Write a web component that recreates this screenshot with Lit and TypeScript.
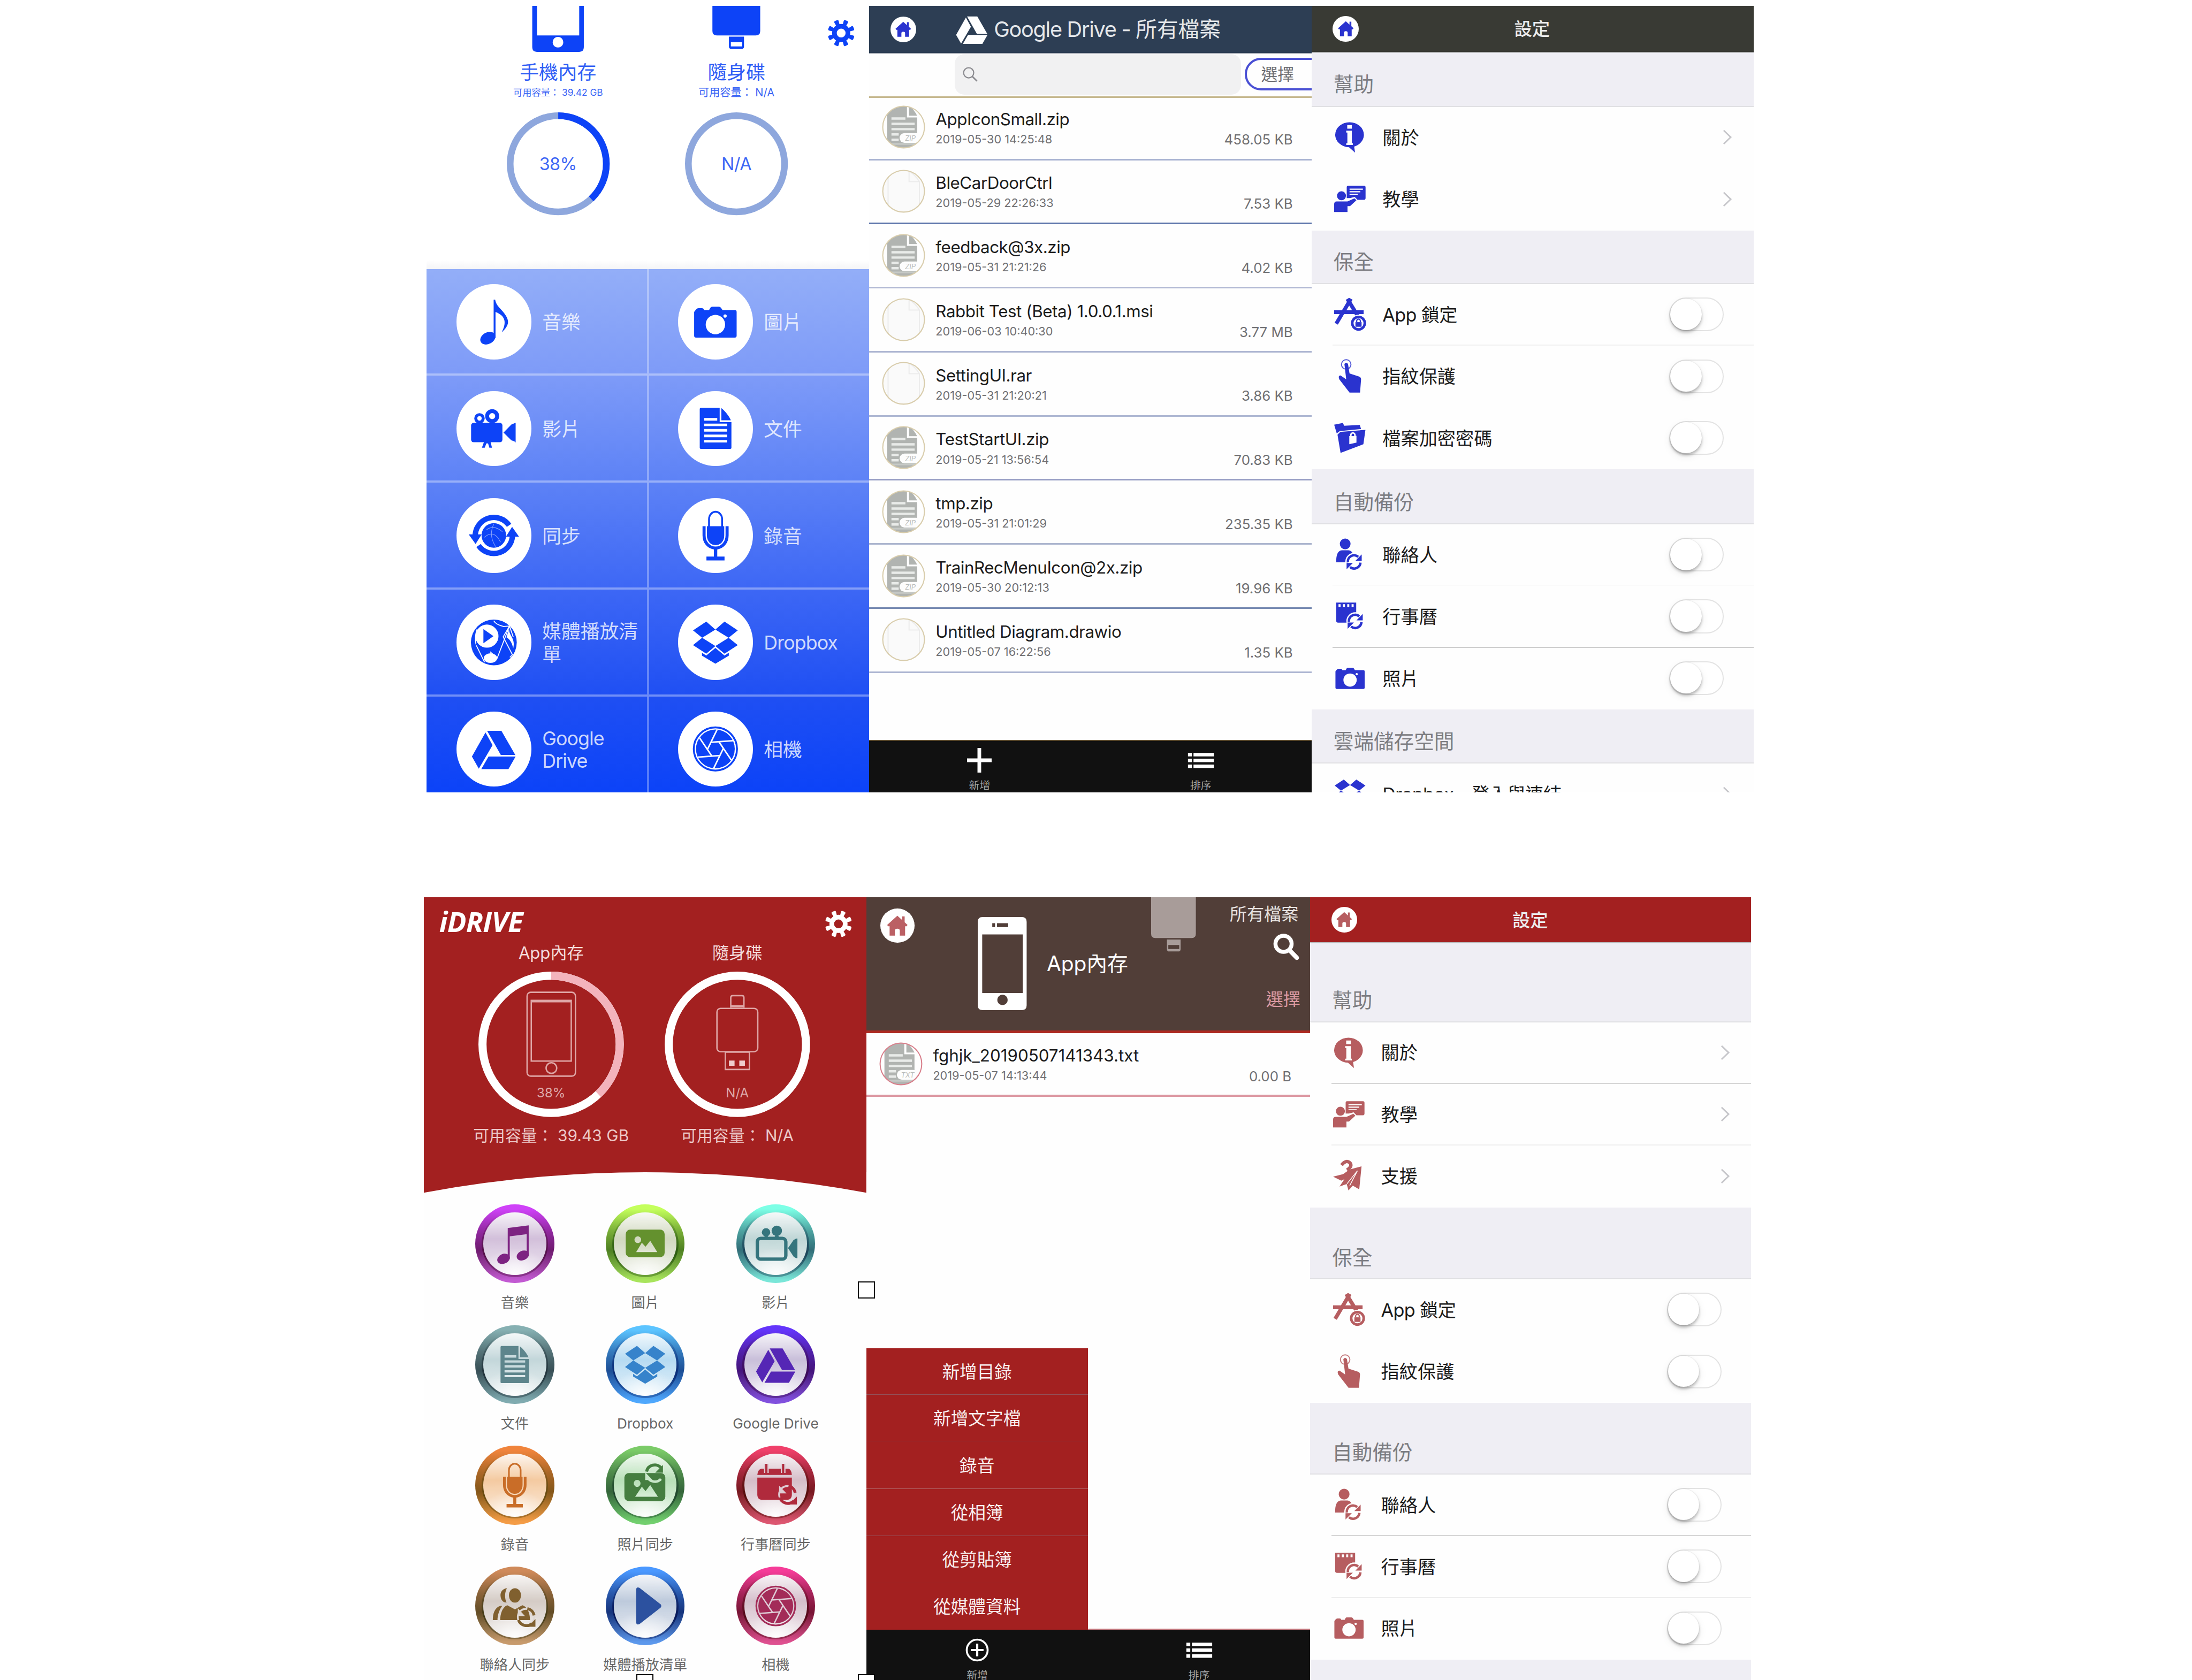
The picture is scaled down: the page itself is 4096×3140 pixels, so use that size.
import { LitElement, html, svg, unsafeCSS, nothing } from "lit";
import { customElement, property } from "lit/decorators.js";
import { classMap } from "lit/directives/class-map.js";
import { styleMap } from "lit/directives/style-map.js";

/* Lengths in the style sheets are written in "u": the board is 1568u wide. */
const UNIT = 4096 / 1568;
const sheet = (s: TemplateStringsArray) =>
  unsafeCSS(s[0].replace(/(-?[\d.]+)u\b/g, (_, n) => `${(parseFloat(n) * UNIT).toFixed(3)}px`));

/* ---------- glyphs, all drawn on a 24 x 24 box ---------- */

const polar = (r: number, deg: number) =>
  `${(12 + r * Math.cos((deg * Math.PI) / 180)).toFixed(2)} ${(12 + r * Math.sin((deg * Math.PI) / 180)).toFixed(2)}`;

const apertureLines = () => {
  let d = "";
  for (let k = 0; k < 6; k++) {
    const a = 60 * k - 4;
    d += `M${polar(4.3, a)} L${polar(10.4, a + 99)} `;
  }
  return d;
};

const syncMark = (cx: number, cy: number, r: number) => svg`
  <g transform="translate(${cx} ${cy}) scale(${r / 6})">
    <circle r="6.9" fill="var(--cut)"></circle>
    <path d="M-4.9 .6 A4.9 4.9 0 0 1 3.2 -3.7" fill="none" stroke="currentColor" stroke-width="1.9"></path>
    <path d="M5.9 -5.6 V-.6 H1 Z" fill="currentColor"></path>
    <path d="M4.9 .8 A4.9 4.9 0 0 1 -3.2 4.2" fill="none" stroke="currentColor" stroke-width="1.9"></path>
    <path d="M-5.9 6 V1.1 H-1 Z" fill="currentColor"></path>
  </g>`;

const docShape = svg`
  <path fill-rule="evenodd" d="M4.2 .9 H14.3 V8.6 H20.6 V22.4 a.6 .6 0 0 1 -.6 .6 H4.2 a.6 .6 0 0 1 -.6 -.6 V1.5 a.6 .6 0 0 1 .6 -.6 Z
    M6 6.4 V7.8 H13 V6.4 Z M6 9.4 V10.8 H18.3 V9.4 Z M6 12.3 V13.7 H18.3 V12.3 Z M6 15.3 V16.7 H18.3 V15.3 Z M6 18.2 V19.5 H18.3 V18.2 Z"></path>
  <path d="M15.2 1.1 C17 2.5 19.4 5.4 20.3 7.6 H15.2 Z"></path>`;

const glyphs: Record<string, unknown> = {
  gear: svg`
    <circle cx="12" cy="12" r="6.1" fill="none" stroke="currentColor" stroke-width="4.2"></circle>
    ${[22.5, 67.5, 112.5, 157.5, 202.5, 247.5, 292.5, 337.5].map(
      (a) => svg`<path d="M10.7 6.4 L9.9 .9 Q9.9 -.2 11 -.2 H13 Q14.1 -.2 14.1 .9 L13.3 6.4 Z" transform="rotate(${a} 12 12)"></path>`
    )}`,
  note: svg`
    <ellipse cx="8.8" cy="20.7" rx="4.3" ry="3.1" transform="rotate(-28 8.8 20.7)"></ellipse>
    <path d="M11.9 0 H12.7 C13.2 3 15 4.2 17 6.6 C20.6 11 20.6 13.6 16.2 17.6 C18.8 12.6 18.6 8.8 12.9 6.6 V20.6 H11.9 Z"></path>`,
  notes: svg`
    <path d="M7.9 2.6 L20.4 1 V18.7 H19.2 V6.3 L9.1 7.6 V21 H7.9 Z"></path>
    <ellipse cx="5.4" cy="21" rx="3.9" ry="2.9" transform="rotate(-24 5.4 21)"></ellipse>
    <ellipse cx="16.9" cy="19" rx="3.8" ry="2.8" transform="rotate(-24 16.9 19)"></ellipse>`,
  camera: svg`
    <path fill-rule="evenodd" d="M1.6 5.3 Q2.2 4.6 3 4.6 H4.8 Q5.6 4.6 6 5.6 H8.6 L9.3 4.4 Q9.6 3.8 10.4 3.8 H13.8 Q14.6 3.8 15 4.4 L15.8 5.6 H22.4 Q23.4 5.6 23.4 6.6 V19.4 Q23.4 20.4 22.4 20.4 H1.6 Q.6 20.4 .6 19.4 V6.6 Z
      M12 8.2 a5.2 5.2 0 1 0 .01 0 Z M17.2 7.9 a.9 .9 0 1 0 .01 0 Z"></path>`,
  movie: svg`
    <circle cx="4.3" cy="6.6" r="2" fill="none" stroke="currentColor" stroke-width="1.6"></circle>
    <circle cx="11.1" cy="5.4" r="2.7" fill="none" stroke="currentColor" stroke-width="2.1"></circle>
    <rect x="-.2" y="9" width="16.8" height="10.4" rx="1.4"></rect>
    <path d="M17.2 14.2 L21.4 9.9 Q23.7 9 23.7 9 V19.6 Q23.5 19 21.4 18.4 Z"></path>
    <path d="M6.8 19 H10.2 L11 22.3 H9.6 L8.9 20 H8 L7.1 22.3 H5.6 Z"></path>`,
  cine: svg`
    <circle cx="6.2" cy="5.2" r="2.5"></circle><circle cx="12.6" cy="4.3" r="3.1"></circle>
    <rect x="1" y="8.8" width="17" height="12.4" rx="2" fill="none" stroke="currentColor" stroke-width="2"></rect>
    <path d="M5.6 6.6 H7 L7.6 9 H5 Z M11.8 6.6 H13.4 L14.2 9 H11 Z"></path>
    <path d="M19.3 14.6 L22.6 9.8 Q24.4 8.6 24.9 8.9 V20.6 Q24.2 20.8 22.6 19.6 Z"></path>`,
  doc: docShape,
  sync: svg`
    <path d="M2 12.6 A10 10 0 0 1 20.2 6.6" fill="none" stroke="currentColor" stroke-width="2.9"></path>
    <path d="M22 11.4 A10 10 0 0 1 3.8 17.4" fill="none" stroke="currentColor" stroke-width="2.9"></path>
    <path d="M-1.5 11.4 H5.5 L2.2 16.6 Z M25.5 12.6 H18.5 L21.8 7.4 Z"></path>
    <circle cx="12" cy="12" r="6.6"></circle>
    <path d="M8 9 Q12 6 16.6 10 M7 13 Q12 8.4 15.6 15.6 M12 5.8 Q9 12 13 18" fill="none" stroke="var(--cut)" stroke-width=".3" opacity=".5"></path>`,
  mic: svg`
    <path d="M8.6 7.5 V3.2 a3.5 3.9 0 0 1 7 0 V7.5" fill="none" stroke="currentColor" stroke-width="1"></path>
    <path d="M5.1 7 H19.1 V12 C19.1 16.2 16.4 18.9 13 19.5 V23.3 H16.9 V25.4 H7.2 V23.3 H11.2 V19.5 C7.8 18.9 5.1 16.2 5.1 12 Z"></path>
    <path d="M7.1 6.8 V12 C7.1 15.2 9.3 17.6 12.1 17.6 S17.1 15.2 17.1 12 V6.8" fill="none" stroke="var(--cut)" stroke-width=".7"></path>`,
  media: svg`
    <circle cx="12" cy="12" r="12.3"></circle>
    <g fill="none" stroke="var(--cut)" stroke-width=".5">
      <path d="M12 .4 Q13 2.4 17.2 3.4 L20.4 3.2 L22.4 9 M20.4 3.2 L13.8 20.4 L10 17 M20.4 3.2 L17 9 L22 18.6 L20.6 20"></path>
      <path d="M2.6 13.6 L7 22.6 M3 5 Q1.6 9 2.4 13"></path>
    </g>
    <path d="M20.2 4.6 C20 8.6 23.8 9.6 22.4 15.2 C21.6 10.6 19 9.4 18.8 9.2 Z" fill="var(--cut)"></path>
    <circle cx="8.3" cy="8.6" r="6.2" fill="var(--cut)"></circle>
    <path d="M6.4 4.8 L11.8 8.6 L6.4 12.4 Z"></path>
    <ellipse cx="10.2" cy="20.4" rx="3.6" ry="2.6" fill="var(--cut)"></ellipse>`,
  dropbox: svg`
    <path d="M7.1 .8 L0 5.5 L4.9 9.5 L12 5.1 Z M16.9 .8 L24 5.5 L19.1 9.5 L12 5.1 Z M0 13.4 L7.1 18 L12 13.9 L4.9 9.5 Z M24 13.4 L16.9 18 L12 13.9 L19.1 9.5 Z"></path>
    <path d="M12 14.9 L7.1 19 L4.8 17.5 V19.1 L12 23.4 L19.2 19.1 V17.5 L16.9 19 Z"></path>`,
  gdrive: svg`
    <path transform="translate(-1 -.1) scale(1.08)" d="M7.9 3 L1.15 15 L4.58 21 L11.4 9.3 Z M9.4 15 L5.8 21.2 H19.3 L22.85 15 Z M22.7 14.2 L15.8 2.2 H8.7 L15.5 14.2 Z"></path>`,
  aperture: svg`
    <circle cx="12" cy="12" r="11.6" fill="none" stroke="currentColor" stroke-width="1"></circle>
    <circle cx="12" cy="12" r="10.4"></circle>
    <path d="${apertureLines()}" fill="none" stroke="var(--cut)" stroke-width=".8"></path>`,
  photo: svg`
    <path fill-rule="evenodd" d="M3 3.6 H21 a2.6 2.6 0 0 1 2.6 2.6 V17.4 a2.6 2.6 0 0 1 -2.6 2.6 H3 a2.6 2.6 0 0 1 -2.6 -2.6 V6.2 A2.6 2.6 0 0 1 3 3.6 Z
      M7.6 7.6 a2 2 0 1 0 .01 0 Z M6.6 17 H19.2 L15 10.2 L12.2 13.8 L10 11.4 Z"></path>`,
  photoSync: svg`
    <path fill-rule="evenodd" d="M2.2 4.9 H21.4 a2.6 2.6 0 0 1 2.6 2.6 V19 a2.6 2.6 0 0 1 -2.6 2.6 H2.2 A2.6 2.6 0 0 1 -.4 19 V7.5 A2.6 2.6 0 0 1 2.2 4.9 Z
      M7.2 8.9 a2 2.1 0 1 0 .01 0 Z M6 19 H19.6 L15 12 L12.2 15.6 L10 13 Z"></path>
    <path d="M12.8 4 A5 5 0 0 1 21.5 1.8" fill="none" stroke="currentColor" stroke-width="1.8"></path>
    <path d="M22.6 0 V4.6 H18 Z"></path>
    <path d="M13.2 7 A5 5 0 0 0 21.4 8.4" fill="none" stroke="var(--cut)" stroke-width="1.5"></path>
    <path d="M12 4.4 V9 H16.4 Z" fill="var(--cut)"></path>`,
  calSync: svg`
    <path d="M3.4 2.2 H19.6 Q21.4 2.8 21.6 6 H1 Q1.2 2.8 3.4 2.2 Z M1 7.6 H21.6 V18 Q21.4 20.6 19 20.8 H3.6 Q1.2 20.6 1 18 Z"></path>
    <path d="M6.4 -.6 V4.8 M16.4 -.6 V4.8" stroke="var(--cut)" stroke-width="2.8"></path>
    <path d="M6.4 -.6 V4.8 M16.4 -.6 V4.8" stroke="currentColor" stroke-width="1.3"></path>
    <circle cx="19" cy="17.6" r="5" fill="none" stroke="var(--cut)" stroke-width="1.1"></circle>
    <path d="M14.4 19.4 A5 5 0 0 0 22.6 21.6 M23.6 16.6 A5 5 0 0 0 19.6 12.6" fill="none" stroke="currentColor" stroke-width="1.7"></path>
    <path d="M24.6 18.8 V23.6 H20 Z"></path><path d="M14 12.4 V17 H18.4 Z" fill="var(--cut)"></path>`,
  people: svg`
    <path d="M7.4 1.4 C4.6 1.6 3.4 4 3.6 6 C3.8 8.6 5.2 10 7.2 10 C6 7.4 6 4 7.4 1.4 Z"></path>
    <ellipse cx="12.2" cy="5.7" rx="3.6" ry="4.3"></ellipse>
    <path d="M3.4 12 H4.6 C2.6 14.6 1.8 18 1.8 20.4 H-1 C-1 16.4 .2 13 3.4 12 Z M7.6 11.6 L12.2 14 L16.6 11.6 C20 12.6 21.2 17 21.2 20.4 H3.4 C3.4 17 4.6 12.8 7.6 11.6 Z"></path>
    <circle cx="18.8" cy="18.6" r="4.9" fill="none" stroke="var(--cut)" stroke-width="1.1"></circle>
    <path d="M14.3 20.4 A5 5 0 0 0 22.4 22.4 M23.6 17.6 A5 5 0 0 0 19.6 13.6" fill="none" stroke="currentColor" stroke-width="1.7"></path>
    <path d="M24.4 19.8 V24.4 H20 Z"></path><path d="M13.9 13.4 V18 H18.2 Z" fill="var(--cut)"></path>`,
  play: svg`<path d="M6.6 2.2 Q6.8 .4 8.6 1.2 L21.2 11 Q22 12 21.2 13 L8.6 22.8 Q6.8 23.6 6.6 21.8 Z"></path>`,
  home: svg`<path d="M12 3.6 L2.8 12 L3.6 13.2 H5 V21.6 H9.8 V17.2 Q9.8 15.4 12 15.4 T14.2 17.2 V21.6 H19 V13.2 H20.4 L21.2 12 L18.6 9.6 V4.2 H16.4 V7.6 Z"></path>`,
  info: svg`
    <path fill-rule="evenodd" d="M11.6 .2 A11.2 9.8 0 0 0 .4 10 A11.2 9.8 0 0 0 11.2 19.7 L15.9 23.9 L15.2 19.2 A11.2 9.8 0 0 0 22.8 10 A11.2 9.8 0 0 0 11.6 .2 Z
      M9.8 2.4 H13.4 V5.2 H9.8 Z M9 6.8 H13.4 V16.6 H14.2 V18 H9 V16.6 H9.9 V8.2 H9 Z"></path>`,
  teach: svg`
    <circle cx="5.3" cy="9.6" r="3.5"></circle>
    <path d="M-.4 22.2 V16 Q-.4 14 1.6 14 H10 L15.4 11.6 L17 13 L12 17.6 H10 V22.2 Z"></path>
    <path fill-rule="evenodd" d="M10.4 1.8 H23 Q24.1 1.8 24.1 3 V11.4 Q24.1 12.7 23 12.7 H17.8 L15.6 10.4 L12 11.4 H9.4 V3 Q9.4 1.8 10.4 1.8 Z
      M11.6 4 V4.9 H22 V4 Z M11.6 6 V6.9 H20 V6 Z M11.6 8 V8.8 H18 V8 Z"></path>`,
  appLock: svg`
    <path d="M12.7 -.2 L1.2 19.2 M9.9 -.2 L18.6 14 M-.4 10.2 H22.6" fill="none" stroke="currentColor" stroke-width="3"></path>
    <circle cx="18.6" cy="18.8" r="6.6" fill="var(--cut)"></circle>
    <circle cx="18.6" cy="18.8" r="4.9" fill="none" stroke="currentColor" stroke-width="2"></circle>
    <path d="M16.2 18 H21 V21.6 H16.2 Z"></path><path d="M17.2 18 V17 a1.4 1.4 0 0 1 2.8 0 V18" fill="none" stroke="currentColor" stroke-width=".9"></path>`,
  finger: svg`
    <circle cx="9" cy="3" r="3.7" fill="none" stroke="currentColor" stroke-width=".8" opacity=".8"></circle>
    <path d="M7.6 2.6 Q9 .8 10.4 2.6 L11.6 10 L19 12.4 Q20.6 13 20.6 14.6 L19.8 25 H11.6 L3.6 14.6 Q2.4 11.6 4.6 11.6 L9 14.6 Z"></path>`,
  folderLock: svg`
    <path d="M-.4 1.6 L6.4 .2 L7.4 2.4 L19.6 1.8 L20.6 5 L4 6.6 L1.6 8.4 Z"></path>
    <path fill-rule="evenodd" d="M2.2 9.4 L4.4 7.2 L24 5.6 L22.4 16.8 L4.6 23.6 Z M11.4 10.4 H12 V9.6 a2.2 2.2 0 0 1 4.4 0 V10.2 H17 V15.6 L11.4 16.8 Z M13.2 10.4 H15.2 V9.6 a1 1 0 0 0 -2 0 Z"></path>`,
  contact: svg`
    <circle cx="8.2" cy="3.6" r="4.2"></circle>
    <path d="M1.2 18 Q1 9 5.6 8.6 H10.8 Q15.4 9 15.2 18 Z"></path>
    ${syncMark(15.2, 17.4, 6)}`,
  calendar: svg`
    <path fill-rule="evenodd" d="M1.2 1.4 H16.8 V17 H2.6 Q1.2 17 1.2 15.4 Z M3 2.6 V4.8 H4.6 V2.6 Z M6.4 2.6 V4.8 H8 V2.6 Z M9.8 2.6 V4.8 H11.4 V2.6 Z M13.2 2.6 V4.8 H14.8 V2.6 Z"></path>
    ${syncMark(16, 15.8, 6)}`,
  support: svg`
    <path d="M-.4 12.6 L7.4 10.6 L12.6 7 L21.8 4.6 L20 22.6 L15 19.6 L11.6 23.4 L10.2 18.4 L4.6 20.4 L8.4 14.6 L6 15.8 Z"></path>
    <path d="M6.2 3.6 Q9.6 -.8 12.8 1.8 Q15 4.6 10.4 7.4" fill="none" stroke="currentColor" stroke-width="2.6"></path>
    <path d="M10.4 18.2 L18.6 8 L12.6 19.6" fill="none" stroke="var(--cut)" stroke-width=".6"></path>`,
  plus: svg`<path d="M10.2 0 H13.8 V10.2 H24 V13.8 H13.8 V24 H10.2 V13.8 H0 V10.2 H10.2 Z"></path>`,
  plusRing: svg`
    <circle cx="12" cy="12" r="10.2" fill="none" stroke="currentColor" stroke-width="1.9"></circle>
    <path d="M10.9 5.8 H13.1 V10.9 H18.2 V13.1 H13.1 V18.2 H10.9 V13.1 H5.8 V10.9 H10.9 Z"></path>`,
  list: svg`<path d="M-.6 4.8 H3.2 V8.2 H-.6 Z M4.8 4.8 H24.6 V8.2 H4.8 Z M-.6 10.5 H3.2 V13.9 H-.6 Z M4.8 10.5 H24.6 V13.9 H4.8 Z M-.6 16.2 H3.2 V19.6 H-.6 Z M4.8 16.2 H24.6 V19.6 H4.8 Z"></path>`,
  lens: svg`
    <circle cx="9.6" cy="9.6" r="8.2" fill="none" stroke="currentColor" stroke-width="1.9"></circle>
    <path d="M15.6 15.6 L23 23" stroke="currentColor" stroke-width="2.4"></path>`,
  lensBold: svg`
    <circle cx="9.4" cy="9.2" r="7.3" fill="none" stroke="currentColor" stroke-width="3.6"></circle>
    <path d="M15.2 15.4 L21.4 21.8" stroke="currentColor" stroke-width="4" stroke-linecap="round"></path>`,
  chevron: svg`<path d="M6.6 1.4 L17.6 12 L6.6 22.6" fill="none" stroke="currentColor" stroke-width="2.4"></path>`,
};

const glyph = (name: string, cls: string) => html`
  <svg class="glyph ${cls}" viewBox="0 0 24 24" fill="currentColor" aria-hidden="true">${glyphs[name]}</svg>`;

const base = sheet`
  :host { display: block; box-sizing: border-box; font-family: Inter, "Noto Sans CJK TC", sans-serif; --cut: #fff; }
  * { box-sizing: border-box; }
  svg { display: block; flex: none; overflow: visible; }
  .stack { display: grid; place-items: center; }
  .stack > * { grid-area: 1 / 1; }
`;

const ring = (size: number, r: number, w: number, track: string, value: number, arc: string) => html`
  <svg class="ring" viewBox="0 0 ${size} ${size}" fill="none" stroke-width=${w}>
    <circle cx=${size / 2} cy=${size / 2} r=${r} stroke=${track}></circle>
    ${value
      ? svg`<circle cx=${size / 2} cy=${size / 2} r=${r} stroke=${arc} pathLength="100" stroke-dasharray="${value} 100"
          transform="rotate(-90 ${size / 2} ${size / 2})"></circle>`
      : nothing}
  </svg>`;

/* ---------- blue home ---------- */

const TILES: [string, string][] = [
  ["note", "音樂"], ["camera", "圖片"],
  ["movie", "影片"], ["doc", "文件"],
  ["sync", "同步"], ["mic", "錄音"],
  ["media", "媒體播放清單"], ["dropbox", "Dropbox"],
  ["gdrive", "Google Drive"], ["aperture", "相機"],
];

@customElement("tile-home")
class TileHome extends LitElement {
  static styles = [base, sheet`
    :host { width: 316.4u; background: #fff; color: #0d43f7; }
    .top { display: flex; height: 188.4u; padding-left: 30.2u; background: linear-gradient(#fff 182u, #f5f5f7 188u); }
    .drive { width: 127.6u; display: flex; flex-direction: column; align-items: center; }
    .device { width: 38u; height: 33.2u; }
    .name { margin-top: 6.8u; font-size: 13.7u; line-height: 16u; color: #2f5df5; }
    .free { margin-top: 2.4u; font-size: 6.6u; line-height: 8u; color: #3a63f5; white-space: pre; }
    .free.loose { font-size: 7.7u; }
    .gauge { margin-top: 10u; width: 73.6u; height: 73.6u; color: #3c66f5; font-size: 12.4u; letter-spacing: -.2u; }
    .ring { width: 73.6u; height: 73.6u; }
    .gear { width: 19u; height: 19u; margin: 10.2u 0 0 1.8u; }
    .tiles { display: grid; grid-template-columns: 159.2u 157.2u; grid-auto-rows: 76.46u;
      background: linear-gradient(#93aef8 0, #7e9bf8 75u, #5d82f6 152u, #3d67f5 229u, #1f4ff3 306u, #0c43f8 374u); }
    .tile { display: flex; align-items: center; padding: .6u 0 0 21.3u; border-bottom: 1.7u solid rgba(255,255,255,.36);
      border-right: 1.9u solid rgba(255,255,255,.3); }
    .tile.right { border-right: 0; padding-left: 20.6u; }
    .disc { flex: none; width: 53.8u; height: 53.8u; border-radius: 50%; background: #fff; margin-right: 7.6u; }
    .big { width: 32u; height: 32u; }
    .label { font-size: 13.7u; line-height: 16.2u; color: rgba(255,255,255,.8); padding-top: .8u; }
    .wide { letter-spacing: -.35u; }
  `];
  render() {
    return html`
      <div class="top">
        <div class="drive">
          <svg class="device" viewBox="0 0 38 33.2" fill="currentColor">
            <path fill-rule="evenodd" d="M.6 0 H4 V21.2 H34.2 V0 H37.5 V29.6 Q37.5 32.9 34.2 32.9 H3.9 Q.6 32.9 .6 29.6 Z M19 22.2 a3.8 3.8 0 1 0 .01 0 Z"></path>
          </svg>
          <div class="name">手機內存</div>
          <div class="free">可用容量： 39.42 GB</div>
          <div class="stack gauge">${ring(73.6, 34.4, 4.8, "#8ea7dd", 38, "#0d43f7")}<span>38%</span></div>
        </div>
        <div class="drive">
          <svg class="device" viewBox="0 0 38 33.2" fill="currentColor">
            <path fill-rule="evenodd" d="M2 0 H36.2 V18 Q36.2 21.2 33 21.2 H5.2 Q2 21.2 2 18 Z M13.8 22 H24.6 V29 Q24.6 30.8 22.8 30.8 H15.6 Q13.8 30.8 13.8 29 Z M15.2 26 V29 H23.2 V26 Z"></path>
          </svg>
          <div class="name">隨身碟</div>
          <div class="free loose">可用容量： N/A</div>
          <div class="stack gauge">${ring(73.6, 34.4, 4.8, "#8ea7dd", 0, "")}<span>N/A</span></div>
        </div>
        ${glyph("gear", "gear")}
      </div>
      <div class="tiles">
        ${TILES.map(([icon, label], i) => html`
          <div class=${classMap({ tile: true, right: i % 2 === 1 })}>
            <div class="disc stack">${glyph(icon, "big")}</div>
            <div class=${classMap({ label: true, wide: /[A-Za-z]/.test(label) })}>${label}</div>
          </div>`)}
      </div>`;
  }
}

/* ---------- shared file row and bottom bar ---------- */

interface FileItem { name: string; date: string; size: string; badge: string; line: string; }

const fileStyles = sheet`
  .file { display: flex; height: 45.85u; padding: 0 13.3u 0 9.1u; border-bottom: 1.5u solid; }
  .kind { width: 31u; height: 31u; margin: 6.7u 7.6u 0 0; }
  .kind text { font: italic 5px Inter, sans-serif; }
  .name { margin-top: 9.5u; font-size: 12u; line-height: 14u; color: #1c1c1c; white-space: pre; letter-spacing: -.17u; }
  .date { margin-top: 2.1u; font-size: 8.3u; line-height: 10u; color: #707073; white-space: pre; }
  .size { margin: 25.1u 0 0 auto; font-size: 9.9u; line-height: 12u; color: #707073; white-space: pre; }
  .bar { display: flex; height: 37.6u; background: #111; color: #fff; border-top: 1u solid #5a4a2e; flex: none; }
  .bar div { flex: 1; display: flex; flex-direction: column; align-items: center; }
  .act { width: 17.6u; height: 17.6u; margin-top: 5.2u; }
  .bar span { margin-top: 4.2u; font-size: 7.6u; line-height: 10u; color: #a5a5a5; }
`;

const fileRow = (f: FileItem, edge: string) => html`
  <div class="file" style=${styleMap({ borderColor: f.line })}>
    <svg class="kind" viewBox="0 0 31 31">
      <defs><clipPath id="disc"><circle cx="15.5" cy="15.5" r="15"></circle></clipPath></defs>
      ${f.badge
        ? svg`<g clip-path="url(#disc)">
            <path d="M3.7 0 H17.9 V8.6 H25.2 V31 H3.7 Z M19.4 0 Q23 3 25.2 7.4 H19.4 Z" fill="#b1b4b1"></path>
            <path d="M6.8 9.4 H16.8 M6.8 13.2 H23.4 M6.8 17 H23.4 M6.8 20.8 H12 M6.8 24.6 H12" stroke="#e9ebe9" stroke-width="1.7"></path>
            <path d="M3.7 27.6 H25.2" stroke="#c6c9c6" stroke-width="1.2"></path></g>
            <rect x="12.6" y="19.8" width="15.4" height="7" rx="3.5" fill="#fdfdfd"></rect>
            <text x="20.3" y="25.1" text-anchor="middle" fill="#b9bbb9">${f.badge}</text>`
        : svg`<g clip-path="url(#disc)"><rect width="31" height="31" fill="#fafafa"></rect>
            <path d="M4.4 0 V31 M26.8 31 V8.6 H19.4 V0 M19.4 1 Q24 4 26.8 8.6" fill="none" stroke="#ececec" stroke-width=".8"></path></g>`}
      <circle cx="15.5" cy="15.5" r="14.9" fill="none" stroke=${edge} stroke-width=".8"></circle>
    </svg>
    <div><div class="name">${f.name}</div><div class="date">${f.date}</div></div>
    <div class="size">${f.size}</div>
  </div>`;

const bottomBar = (add: string) => html`
  <div class="bar">
    <div>${glyph(add, "act")}<span>新增</span></div>
    <div>${glyph("list", "act")}<span>排序</span></div>
  </div>`;

const FILES: FileItem[] = [
  { name: "AppIconSmall.zip", date: "2019-05-30 14:25:48", size: "458.05 KB", badge: "ZIP", line: "#a9b3d2" },
  { name: "BleCarDoorCtrl", date: "2019-05-29 22:26:33", size: "7.53 KB", badge: "", line: "#6179ad" },
  { name: "feedback@3x.zip", date: "2019-05-31 21:21:26", size: "4.02 KB", badge: "ZIP", line: "#b3bad4" },
  { name: "Rabbit Test (Beta) 1.0.0.1.msi", date: "2019-06-03 10:40:30", size: "3.77 MB", badge: "", line: "#adb6d2" },
  { name: "SettingUI.rar", date: "2019-05-31 21:20:21", size: "3.86 KB", badge: "", line: "#adb6d2" },
  { name: "TestStartUI.zip", date: "2019-05-21 13:56:54", size: "70.83 KB", badge: "ZIP", line: "#989fc5" },
  { name: "tmp.zip", date: "2019-05-31 21:01:29", size: "235.35 KB", badge: "ZIP", line: "#abb4ce" },
  { name: "TrainRecMenuIcon@2x.zip", date: "2019-05-30 20:12:13", size: "19.96 KB", badge: "ZIP", line: "#7588b1" },
  { name: "Untitled Diagram.drawio", date: "2019-05-07 16:22:56", size: "1.35 KB", badge: "", line: "#adb6d2" },
];

@customElement("cloud-files")
class CloudFiles extends LitElement {
  static styles = [base, fileStyles, sheet`
    :host { display: flex; flex-direction: column; width: 316.5u; background: #fefefe; overflow: hidden; }
    .head { display: flex; align-items: center; height: 33.9u; padding-left: 15.5u; background: #2d3e54; color: #fff; flex: none; }
    .dot { width: 18.4u; height: 18.4u; border-radius: 50%; background: #fff; color: #2a33cf; }
    .dot .home { width: 14.4u; height: 14.4u; margin-top: -1u; }
    .logo { width: 23u; height: 23u; margin: 0 4.1u 0 28.4u; }
    .title { font-size: 15.2u; line-height: 20u; letter-spacing: -.5u; color: #e4e7ea; white-space: pre; padding-top: .4u; }
    .title span { letter-spacing: 0; }
    .find { display: flex; flex: none; height: 32u; padding-left: 61.2u; border-top: 1u solid #b6bac2; border-bottom: 1.3u solid #c6b88f; }
    .field { width: 205u; height: 29u; border-radius: 7u; background: #f1f1f2; color: #8a8a8f; padding: 9u 0 0 6u; flex: none; }
    .lens { width: 10.6u; height: 10.6u; }
    .pick { width: 80u; height: 23.2u; margin: 2.8u 0 0 2.6u; border: 1.6u solid #4a50d4; border-radius: 11.6u; flex: none;
      padding-left: 10.2u; font-size: 11.8u; line-height: 20.4u; color: #6d6d72; }
    .list { margin-top: -1.1u; flex: 1; }
  `];
  render() {
    return html`
      <div class="head">
        <div class="dot stack">${glyph("home", "home")}</div>
        ${glyph("gdrive", "logo")}
        <div class="title">Google Drive - <span>所有檔案</span></div>
      </div>
      <div class="find">
        <div class="field">${glyph("lens", "lens")}</div>
        <div class="pick">選擇</div>
      </div>
      <div class="list">${FILES.map((f) => fileRow(f, "#d8ccab"))}</div>
      ${bottomBar("plus")}`;
  }
}

/* ---------- settings ---------- */

interface Section { height: number; title: string; rows: [string, string, string?][]; arrow?: boolean; }

const BLUE: Section[] = [
  { height: 38.7, title: "幫助", arrow: true, rows: [["info", "關於"], ["teach", "教學"]] },
  { height: 38.5, title: "保全", rows: [["appLock", "App 鎖定", "#f1f1f1"], ["finger", "指紋保護"], ["folderLock", "檔案加密密碼"]] },
  { height: 39.4, title: "自動備份", rows: [["contact", "聯絡人", "#fafafa"], ["calendar", "行事曆", "#cecece"], ["camera", "照片"]] },
  { height: 38.8, title: "雲端儲存空間", arrow: true, rows: [["dropbox", "Dropbox - 登入與連結"]] },
];

const RED: Section[] = [
  { height: 56.4, title: "幫助", arrow: true, rows: [["info", "關於", "#d6d6d6"], ["teach", "教學", "#eeeeee"], ["support", "支援"]] },
  { height: 51.5, title: "保全", rows: [["appLock", "App 鎖定"], ["finger", "指紋保護"]] },
  { height: 51.3, title: "自動備份", rows: [["contact", "聯絡人", "#d6d6d6"], ["calendar", "行事曆", "#eeeeee"], ["camera", "照片"]] },
  { height: 40, title: "", rows: [] },
];

@customElement("settings-page")
class SettingsPage extends LitElement {
  @property({ attribute: false }) sections: Section[] = [];
  @property({ reflect: true }) tone = "blue";
  static styles = [base, sheet`
    :host { width: 316.3u; background: #fefefe; overflow: hidden; --ink: #2a33cf; --bar: #393a34; }
    :host([tone="red"]) { width: 315.6u; --ink: #b65d60; --bar: #a32020; }
    .head { display: grid; grid-template-columns: 1fr auto 1fr; align-items: center; height: 33.8u; padding-left: 15.3u; background: var(--bar);
      border-bottom: 1u solid #b9babb; }
    :host([tone="red"]) .head { height: 33u; }
    .dot { width: 18.4u; height: 18.4u; border-radius: 50%; background: #fff; color: var(--ink); }
    .dot .home { width: 14.4u; height: 14.4u; margin-top: -1u; }
    .title { font-size: 12.8u; line-height: 18u; font-weight: 500; color: #ececec; margin-right: 15.9u; padding-top: .6u; }
    .cap { display: flex; align-items: flex-end; padding: 0 0 6.3u 15.8u; background: #efeef4; border-bottom: .9u solid #e0e0e3;
      font-size: 14.4u; line-height: 18u; color: #7c7c81; }
    :host([tone="red"]) .cap { padding-bottom: 5.9u; }
    .row { display: flex; align-items: center; height: 44.15u; margin-left: 15.3u; padding-right: 21.3u; border-bottom: 1.1u solid transparent; }
    .arrow { padding-right: 13.4u; }
    .ico { width: 22u; height: 22u; margin: 0 12.1u 0 1.4u; color: var(--ink); }
    .text { font-size: 13.1u; line-height: 18u; color: #1c1c1c; white-space: pre; flex: 1; padding-top: .5u; }
    .latin { letter-spacing: -.25u; }
    .chev { width: 11u; height: 11u; color: #c6c6ca; }
    .toggle { width: 39u; height: 24.2u; border-radius: 12.1u; border: 1u solid #e3e3e3; background: #fff; }
    .knob { width: 22.4u; height: 22.4u; margin: 0; border-radius: 50%; background: #fff;
      box-shadow: 0 1.6u 2u rgba(0,0,0,.24), 0 2u 6u rgba(0,0,0,.08), 0 0 .8u rgba(0,0,0,.15); }
  `];
  render() {
    return html`
      <div class="head">
        <div class="dot stack">${glyph("home", "home")}</div>
        <div class="title">設定</div>
      </div>
      ${this.sections.map((s) => html`
        <div class="cap" style=${styleMap({ height: `${s.height * UNIT}px` })}>${s.title}</div>
        ${s.rows.map(([icon, label, line]) => html`
          <div class=${classMap({ row: true, arrow: !!s.arrow })} style=${styleMap({ borderColor: line ?? "transparent" })}>
            ${glyph(icon, "ico")}
            <div class=${classMap({ text: true, latin: /[A-Za-z]/.test(label) })}>${label}</div>
            ${s.arrow ? glyph("chevron", "chev") : html`<div class="toggle"><div class="knob"></div></div>`}
          </div>`)}`)}`;
  }
}

/* ---------- red home ---------- */

interface Gloss { icon: string; label: string; top: string; dark: string; low: string; face: string; ink: string; }

const GLOSS: Gloss[] = [
  { icon: "notes", label: "音樂", top: "#cf42f8", dark: "#541049", low: "#c25ad2", face: "#cdb8d6", ink: "#7d2382" },
  { icon: "photo", label: "圖片", top: "#c4ff5c", dark: "#2d5c12", low: "#a8e45c", face: "#ccd4b8", ink: "#64912e" },
  { icon: "cine", label: "影片", top: "#7dffe6", dark: "#1c4559", low: "#7ae6d8", face: "#b9d2d2", ink: "#35757d" },
  { icon: "doc", label: "文件", top: "#86b0b2", dark: "#22343c", low: "#80abb0", face: "#bcd2d6", ink: "#5d858c" },
  { icon: "dropbox", label: "Dropbox", top: "#5cc4ff", dark: "#0b2d78", low: "#4fa8fd", face: "#add6f0", ink: "#3683cb" },
  { icon: "gdrive", label: "Google Drive", top: "#6435fb", dark: "#3c0b58", low: "#8150de", face: "#c3b8d6", ink: "#5526b5" },
  { icon: "mic", label: "錄音", top: "#f0843c", dark: "#664a10", low: "#f49c46", face: "#f3c496", ink: "#c96d28" },
  { icon: "photoSync", label: "照片同步", top: "#7bcb68", dark: "#20482d", low: "#72cf6e", face: "#b0ddb0", ink: "#457e40" },
  { icon: "calSync", label: "行事曆同步", top: "#f0406a", dark: "#560e0c", low: "#dc5670", face: "#d1b6c2", ink: "#b02a3c" },
  { icon: "people", label: "聯絡人同步", top: "#cf8a5a", dark: "#453c18", low: "#c79a6c", face: "#d0c6bf", ink: "#80602f" },
  { icon: "play", label: "媒體播放清單", top: "#4a98ff", dark: "#071858", low: "#5c98ec", face: "#b6c4d8", ink: "#2c519f" },
  { icon: "aperture", label: "相機", top: "#f53c98", dark: "#560a1a", low: "#de5090", face: "#d1b8c6", ink: "#a32b58" },
];

@customElement("gloss-home")
class GlossHome extends LitElement {
  static styles = [base, sheet`
    :host { width: 316.5u; background: #fefefe; overflow: hidden; }
    .hero { height: 196.8u; background: #a32020; color: #f4dcdc; }
    .top { display: flex; justify-content: space-between; height: 30u; padding: 9.6u 10.4u 0 11u; color: #fff; }
    .brand { font: italic 700 20.2u/15u "Open Sans", sans-serif; letter-spacing: -.25u; }
    .gear { width: 19u; height: 19u; }
    .drives { display: flex; padding-left: 24.4u; }
    .drive { width: 133.2u; display: flex; flex-direction: column; align-items: center; white-space: pre; }
    .name { margin-top: 1.8u; font-size: 11.9u; line-height: 16u; }
    .gauge { margin-top: 5.5u; width: 104u; height: 104u; }
    .ring, .art { width: 104u; height: 104u; }
    .pct { align-self: end; font-size: 9.2u; line-height: 12u; margin-bottom: 11.2u; color: #dea9a9; }
    .free { margin-top: 5.5u; font-size: 11.4u; line-height: 16u; letter-spacing: .04u; color: #ecc8c8; }
    .curve { width: 316.5u; height: 14.8u; }
    .grid { display: grid; grid-template-columns: repeat(3, 93.3u); grid-auto-rows: 86.4u; padding: 8.1u 0 0 18.4u; }
    .cell { display: flex; flex-direction: column; align-items: center; white-space: nowrap; }
    .gloss { width: 56.4u; height: 56.4u; border-radius: 50%; }
    .inner { width: 47.6u; height: 47.6u; border-radius: 50%; }
    .face { width: 45u; height: 45u; border-radius: 50%; }
    .mark { width: 28.8u; height: 28.8u; }
    .cell span { margin-top: 7.2u; font-size: 10u; line-height: 14u; color: #666; }
  `];
  render() {
    return html`
      <div class="hero">
        <div class="top"><div class="brand">iDRIVE</div>${glyph("gear", "gear")}</div>
        <div class="drives">
          <div class="drive">
            <div class="name">App內存</div>
            <div class="stack gauge">
              ${ring(104, 49.1, 5.8, "#ffffff", 38, "#f3b3bc")}
              <svg class="art" viewBox="0 0 104 104" fill="none" stroke="#dfa6a6" stroke-width="1">
                <rect x="34.8" y="14.8" width="34.6" height="60" rx="2.6"></rect>
                <rect x="37.8" y="20.6" width="28.6" height="43.4"></rect>
                <path d="M37.8 21.2 H66.4" stroke-width="1.6"></path>
                <circle cx="52.2" cy="69" r="3.8"></circle>
              </svg>
              <span class="pct">38%</span>
            </div>
            <div class="free">可用容量： 39.43 GB</div>
          </div>
          <div class="drive">
            <div class="name">隨身碟</div>
            <div class="stack gauge">
              ${ring(104, 49.1, 5.8, "#ffffff", 0, "")}
              <svg class="art" viewBox="0 0 104 104" fill="none" stroke="#dfa6a6" stroke-width="1">
                <path d="M47.3 25.8 V18.6 Q47.3 17.2 48.7 17.2 H55.3 Q56.7 17.2 56.7 18.6 V25.8"></path>
                <path d="M47.3 24.8 H56.7" stroke-width="1.6"></path>
                <rect x="37.4" y="26.3" width="29.2" height="31" rx="2.6"></rect>
                <path d="M43.4 57.6 H60.6 V70 H43.4 Z"></path>
                <path d="M46 63.6 H50 V67.4 H46 Z M53.4 63.6 H57.4 V67.4 H53.4 Z" fill="#efcccc" stroke="none"></path>
              </svg>
              <span class="pct">N/A</span>
            </div>
            <div class="free">可用容量： N/A</div>
          </div>
        </div>
      </div>
      <svg class="curve" viewBox="0 0 316.5 14.8" preserveAspectRatio="none"><path d="M0 -1 H316.5 V14.6 Q158 -14.6 0 14.6 Z" fill="#a32020"></path></svg>
      <div class="grid">
        ${GLOSS.map((g) => html`
          <div class="cell">
            <div class="gloss stack" style=${styleMap({
              background: `linear-gradient(${g.top} 6%, color-mix(in srgb, ${g.top} 50%, ${g.dark}) 34%, color-mix(in srgb, ${g.top} 22%, ${g.dark}) 58%, color-mix(in srgb, ${g.low} 60%, ${g.dark}) 78%, ${g.low} 96%)`,
              color: g.ink, "--cut": `color-mix(in srgb, ${g.face} 70%, #fff)`,
            })}>
              <div class="inner" style=${styleMap({
                background: `linear-gradient(transparent 8%, ${g.dark} 66%, color-mix(in srgb, ${g.low} 50%, ${g.dark}) 98%)`,
              })}></div>
              <div class="face" style=${styleMap({
                background: `radial-gradient(ellipse 56% 42% at 50% 100%, rgba(255,255,255,.95) 0, rgba(255,255,255,0) 100%), linear-gradient(rgba(255,255,255,.85) 0, rgba(255,255,255,.1) 42%, rgba(255,255,255,.3) 60%, rgba(255,255,255,.62) 100%), ${g.face}`,
              })}></div>
              ${glyph(g.icon, "mark")}
            </div>
            <span>${g.label}</span>
          </div>`)}
      </div>`;
  }
}

/* ---------- local files ---------- */

const MENU: [string, string][] = [
  ["新增目錄", "#93515a"], ["新增文字檔", "#9c2326"], ["錄音", "#b0676a"],
  ["從相簿", "#935560"], ["從剪貼簿", "#9c2326"], ["從媒體資料", "#a32020"],
];

@customElement("local-files")
class LocalFiles extends LitElement {
  static styles = [base, fileStyles, sheet`
    :host { display: flex; flex-direction: column; width: 317.4u; background: #fefefe; overflow: hidden; }
    .head { display: grid; grid-template-columns: 79.7u 49.7u 74.4u 52u 1fr; align-items: start; height: 97u; background: #513e38;
      border-bottom: 2u solid #ad2a21; color: #fff; flex: none; white-space: nowrap; }
    .dot { width: 24.4u; height: 24.4u; border-radius: 50%; background: #fff; color: #bb6064; margin: 8u 0 0 10.1u; }
    .dot .home { width: 19u; height: 19u; margin-top: -1u; }
    .phone { width: 35u; height: 66.6u; margin-top: 14.1u; }
    .store { margin-top: 38.2u; margin-left: -.3u; font-size: 14.9u; line-height: 18u; letter-spacing: -.05u; }
    .stick { width: 32u; height: 39u; }
    .tools { display: flex; flex-direction: column; align-items: flex-end; padding-right: 6.9u; color: #e6e2e0; font-size: 12.3u; line-height: 16u; }
    .tools > :first-child { margin-top: 4.1u; margin-right: 1.4u; }
    .tools .seek { width: 19u; height: 19u; margin: 6u .4u 19.9u 0; color: #fff; }
    .tools > :last-child { color: #da99a1; }
    .file { border-bottom-width: 1.7u; margin-top: -.2u; padding-left: 9.1u; }
    .file .name { letter-spacing: 0; }
    .body { flex: 1; display: flex; flex-direction: column; justify-content: flex-end; border-bottom: 1u solid #cf7f86; }
    .menu { width: 158.4u; background: #a32020; color: #f6ecec; margin-bottom: -1u; }
    .item { height: 33.6u; font-size: 12.5u; line-height: 34.2u; text-align: center; border-bottom: .7u solid; }
    .item span { color: #f8eeee; }
    .bar { height: 36.2u; border-top: 0; }
    .bar .act { margin-top: 6u; }
    .bar span { margin-top: 4u; }
  `];
  render() {
    return html`
      <div class="head">
        <div class="dot stack">${glyph("home", "home")}</div>
        <svg class="phone" viewBox="0 0 35 66.6" fill="#fff">
          <path fill-rule="evenodd" d="M3.4 0 H31.6 Q35 0 35 3.4 V63.2 Q35 66.6 31.6 66.6 H3.4 Q0 66.6 0 63.2 V3.4 Q0 0 3.4 0 Z
            M3.2 12.4 V54.4 H32.2 V12.4 Z M17.7 55.6 a3.7 3.7 0 1 0 .01 0 Z M10.4 4.4 H12.4 V7.2 H10.4 Z M13.8 4.4 H21.8 V7.2 H13.8 Z"></path>
        </svg>
        <div class="store">App內存</div>
        <svg class="stick" viewBox="0 0 32 39" fill="#a89c99">
          <path fill-rule="evenodd" d="M0 0 H32 V26.2 Q32 29.2 29 29.2 H3 Q0 29.2 0 26.2 Z M11.3 30.2 H21.1 V37 Q21.1 38.8 19.3 38.8 H13.1 Q11.3 38.8 11.3 37 Z M12.3 34.2 V37 H20.1 V34.2 Z"></path>
        </svg>
        <div class="tools"><span>所有檔案</span>${glyph("lensBold", "seek")}<span>選擇</span></div>
      </div>
      ${fileRow({ name: "fghjk_20190507141343.txt", date: "2019-05-07 14:13:44", size: "0.00 B", badge: "TXT", line: "#dc97a1" }, "#d9808c")}
      <div class="body">
        <div class="menu">
          ${MENU.map(([label, line]) => html`<div class="item" style=${styleMap({ borderColor: line })}><span>${label}</span></div>`)}
        </div>
      </div>
      ${bottomBar("plusRing")}`;
  }
}

/* ---------- board ---------- */

@customElement("app-root")
class AppRoot extends LitElement {
  static styles = [base, sheet`
    :host { position: relative; width: 4096px; height: 3140px; overflow: hidden; background: #fff; }
    .row { display: flex; overflow: hidden; }
    .first { height: 562.8u; margin: 4u 0 75.2u 305.2u; width: 949.2u; }
    .second { height: 560.1u; margin-left: 303.2u; width: 949.5u; }
    .row > * { flex: none; height: 100%; overflow: hidden; }
    .page { padding-top: .05u; }
    .handle { position: absolute; width: 12.2u; height: 12.2u; border: 1.1u solid #000; background: #fff; }
    .h1 { left: 613.6u; top: 916.8u; }
    .h2 { left: 455.3u; top: 1197.8u; }
    .h3 { left: 613.6u; top: 1197.8u; }
  `];
  render() {
    return html`
      <div class="page">
        <div class="row first">
          <tile-home></tile-home>
          <cloud-files></cloud-files>
          <settings-page .sections=${BLUE}></settings-page>
        </div>
        <div class="row second">
          <gloss-home></gloss-home>
          <local-files></local-files>
          <settings-page tone="red" .sections=${RED}></settings-page>
        </div>
      </div>
      <div class="handle h1"></div>
      <div class="handle h2"></div>
      <div class="handle h3"></div>`;
  }
}
